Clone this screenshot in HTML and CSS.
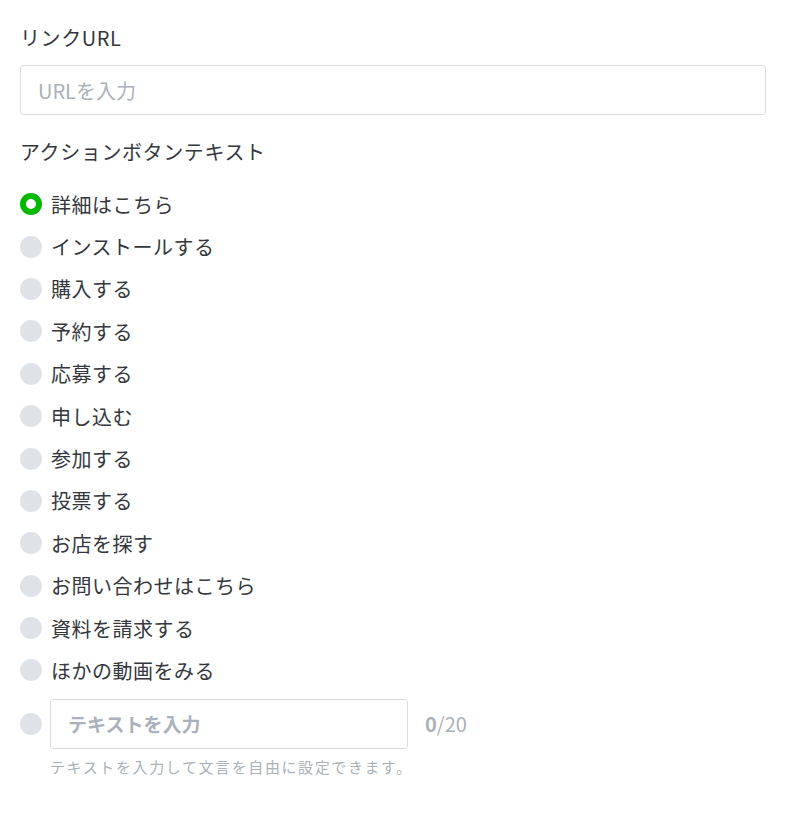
FILE: index.html
```html
<!DOCTYPE html>
<html lang="ja">
<head>
<meta charset="utf-8">
<link rel="stylesheet" href="styles.css">
</head>
<body>
<div class="form">
  <div class="label label-first">リンクURL</div>
  <div class="input url-input"><span class="placeholder">URLを入力</span></div>
  <div class="label label-second">アクションボタンテキスト</div>
  <div class="options">
    <div class="option"><span class="radio checked"></span><span class="opt-text">詳細はこちら</span></div>
    <div class="option"><span class="radio"></span><span class="opt-text">インストールする</span></div>
    <div class="option"><span class="radio"></span><span class="opt-text">購入する</span></div>
    <div class="option"><span class="radio"></span><span class="opt-text">予約する</span></div>
    <div class="option"><span class="radio"></span><span class="opt-text">応募する</span></div>
    <div class="option"><span class="radio"></span><span class="opt-text">申し込む</span></div>
    <div class="option"><span class="radio"></span><span class="opt-text">参加する</span></div>
    <div class="option"><span class="radio"></span><span class="opt-text">投票する</span></div>
    <div class="option"><span class="radio"></span><span class="opt-text">お店を探す</span></div>
    <div class="option"><span class="radio"></span><span class="opt-text">お問い合わせはこちら</span></div>
    <div class="option"><span class="radio"></span><span class="opt-text">資料を請求する</span></div>
    <div class="option"><span class="radio"></span><span class="opt-text">ほかの動画をみる</span></div>
  </div>
  <div class="custom-row">
    <span class="radio"></span>
    <div class="input custom-input"><span class="placeholder bold">テキストを入力</span></div>
    <span class="counter"><b>0</b>/20</span>
  </div>
  <div class="help">テキストを入力して文言を自由に設定できます。</div>
</div>
</body>
</html>
```
FILE: styles.css
```css
html, body {
  margin: 0;
  padding: 0;
  background: #ffffff;
}
body {
  font-family: "Noto Sans CJK JP", "Noto Sans", sans-serif;
  color: #34373c;
}
.form {
  padding: 26px 0 0 20px;
  width: 746px;
}
.label {
  font-size: 20px;
  letter-spacing: 0.6px;
  line-height: 24px;
  height: 24px;
}
.url-input {
  margin-top: 15px;
  height: 50px;
}
.input {
  box-sizing: border-box;
  border: 1px solid #d9dde3;
  border-radius: 3px;
  display: flex;
  align-items: center;
  padding-left: 17px;
  background: #fff;
}
.placeholder {
  color: #aab1ba;
  font-size: 20px;
}
.placeholder.bold {
  font-size: 19px;
  font-weight: 700;
}
.label-second {
  margin-top: 25px;
}
.options {
  margin-top: 19px;
  display: flex;
  flex-direction: column;
}
.option {
  height: 42.4px;
  display: flex;
  align-items: center;
}
.radio {
  box-sizing: border-box;
  width: 22px;
  height: 22px;
  border-radius: 50%;
  background: #dfe2e7;
  flex: none;
}
.radio.checked {
  background: #fff;
  border: 6px solid #00b900;
}
.opt-text {
  margin-left: 9px;
  font-size: 20px;
  letter-spacing: 0.5px;
}
.custom-row {
  margin-top: 7px;
  display: flex;
  align-items: center;
}
.custom-input {
  margin-left: 8px;
  width: 358px;
  height: 50px;
}
.counter {
  margin-left: 17px;
  color: #aab1ba;
  font-size: 20px;
}
.counter b {
  font-weight: 700;
}
.help {
  margin: 8px 0 0 30px;
  font-size: 15px;
  letter-spacing: 1.6px;
  color: #aab1ba;
  line-height: 20px;
}
```
